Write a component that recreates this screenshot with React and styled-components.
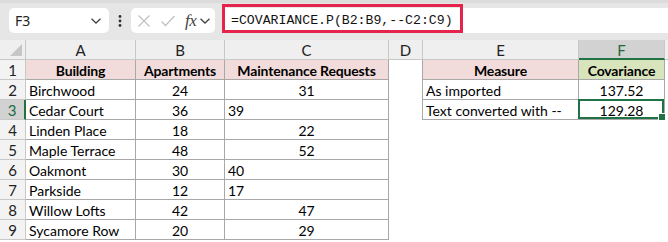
import React from "react";
import styled, { createGlobalStyle } from "styled-components";

const Global = createGlobalStyle`
  html, body { margin: 0; padding: 0; background: #fff; }
  body { width: 668px; height: 242px; overflow: hidden; }
`;

const Page = styled.div`
  width: 668px;
  height: 242px;
  display: flex;
  flex-direction: column;
  overflow: hidden;
  font-family: Lato, "Liberation Sans", sans-serif;
`;

const Toolbar = styled.div`
  height: 40px;
  box-sizing: border-box;
  background: #e6e6e6;
  border-top: 3px solid #dcdcdc;
  display: flex;
  align-items: flex-start;
  padding: 5px 0 0 9px;
`;

const NameBox = styled.div`
  width: 100px;
  height: 25px;
  box-sizing: border-box;
  background: #fff;
  border-radius: 5px;
  display: flex;
  align-items: center;
  justify-content: space-between;
  padding: 0 7px 0 6px;
  font-family: "Noto Sans", sans-serif;
  font-size: 14px;
  color: #222;
`;

const Dots = styled.div`
  width: 22px;
  height: 25px;
  display: flex;
  align-items: center;
  justify-content: center;
`;

const FxBox = styled.div`
  width: 84px;
  height: 25px;
  box-sizing: border-box;
  background: #fff;
  border-radius: 5px;
  display: flex;
  align-items: center;
  padding: 0 0 0 6px;
`;

const FxText = styled.span`
  font-family: "Liberation Serif", serif;
  font-style: italic;
  font-size: 17px;
  color: #444;
  margin-left: 9px;
  letter-spacing: -0.5px;
`;

const FormulaField = styled.div`
  position: relative;
  flex: 1;
  height: 25px;
  margin-left: 7px;
  background: #fff;
  display: flex;
  align-items: center;
  padding-left: 9px;
  font-family: "Liberation Mono", monospace;
  font-size: 13.2px;
  color: #111;
`;

const Highlight = styled.div`
  position: absolute;
  left: 0;
  top: -4px;
  width: 241px;
  height: 29px;
  box-sizing: border-box;
  border: 3px solid #e5234d;
  pointer-events: none;
`;

const Sheet = styled.div`
  display: grid;
  grid-template-columns: 26px 110px 89px 164px 34px 156px 86px 1fr;
  grid-auto-rows: 20px;
  font-size: 14px;
  color: #000;
`;

const Corner = styled.div`
  background: #efefef;
  border-right: 1px solid #c8c8c8;
  border-bottom: 1px solid #c8c8c8;
  box-sizing: border-box;
  position: relative;
  &::after {
    content: "";
    position: absolute;
    right: 3px;
    bottom: 3px;
    width: 0;
    height: 0;
    border-left: 12px solid transparent;
    border-bottom: 12px solid #c6c6c6;
  }
`;

const ColHead = styled.div`
  box-sizing: border-box;
  background: ${(p) => (p.$sel ? "#d2d2d2" : "#efefef")};
  border-right: 1px solid #c8c8c8;
  border-bottom: ${(p) => (p.$sel ? "2px solid #217346" : "1px solid #c8c8c8")};
  color: ${(p) => (p.$sel ? "#1d6a40" : "#222")};
  display: flex;
  align-items: center;
  justify-content: center;
  font-size: 15px;
  padding-top: 1px;
`;

const ColFill = styled.div`
  background: #efefef;
  border-bottom: 1px solid #c8c8c8;
  box-sizing: border-box;
`;

const RowHead = styled.div`
  box-sizing: border-box;
  background: ${(p) => (p.$sel ? "#d2d2d2" : "#f3f3f3")};
  border-right: ${(p) => (p.$sel ? "2px solid #217346" : "1px solid #c8c8c8")};
  border-bottom: 1px solid #c8c8c8;
  color: ${(p) => (p.$sel ? "#1d6a40" : "#222")};
  display: flex;
  align-items: center;
  justify-content: center;
  font-size: 15px;
  padding-top: 1px;
`;

const Cell = styled.div`
  position: relative;
  box-sizing: border-box;
  background: ${(p) => p.$bg || "#fff"};
  border-right: ${(p) => (p.$br ? "1px solid #a8a8a8" : "none")};
  border-bottom: ${(p) => (p.$bb ? "1px solid #a8a8a8" : "none")};
  font-weight: ${(p) => (p.$bold ? 700 : 400)};
  letter-spacing: ${(p) => (p.$bold ? "-0.15px" : "0")};
  display: flex;
  align-items: center;
  justify-content: ${(p) =>
    p.$align === "center" ? "center" : p.$align === "right" ? "flex-end" : "flex-start"};
  padding: 1px 3px 0 3px;
  white-space: nowrap;
`;

const Selection = styled.div`
  position: absolute;
  left: -1px;
  top: -1px;
  right: 0;
  bottom: 0;
  border: 2px solid #217346;
  pointer-events: none;
`;

const Handle = styled.div`
  position: absolute;
  right: -4px;
  bottom: -4px;
  width: 6px;
  height: 6px;
  background: #217346;
  border: 1px solid #fff;
`;

const Chevron = ({ x = 0 }) => (
  <svg width="12" height="8" viewBox="0 0 12 8" style={{ marginLeft: x }}>
    <path d="M1.5 1.8 L6 6 L10.5 1.8" fill="none" stroke="#444" strokeWidth="1.3" />
  </svg>
);

const pink = "#f2dcdb";
const green = "#d8e4bc";

const rows = [
  ["Birchwood", "24", "31", false],
  ["Cedar Court", "36", "39", true],
  ["Linden Place", "18", "22", false],
  ["Maple Terrace", "48", "52", false],
  ["Oakmont", "30", "40", true],
  ["Parkside", "12", "17", true],
  ["Willow Lofts", "42", "47", false],
  ["Sycamore Row", "20", "29", false],
];

const side = {
  2: ["As imported", "137.52"],
  3: ["Text converted with --", "129.28"],
};

export default function App() {
  const cols = ["A", "B", "C", "D", "E", "F"];
  return (
    <Page>
      <Global />
      <Toolbar>
        <NameBox>
          <span>F3</span>
          <Chevron />
        </NameBox>
        <Dots>
          <svg width="4" height="12" viewBox="0 0 4 12">
            <circle cx="2" cy="1.5" r="1.4" fill="#333" />
            <circle cx="2" cy="6" r="1.4" fill="#333" />
            <circle cx="2" cy="10.5" r="1.4" fill="#333" />
          </svg>
        </Dots>
        <FxBox>
          <svg width="14" height="14" viewBox="0 0 14 14">
            <path d="M1.5 1.5 L12.5 12.5 M12.5 1.5 L1.5 12.5" stroke="#c2c2c2" strokeWidth="1.3" fill="none" />
          </svg>
          <svg width="16" height="14" viewBox="0 0 16 14" style={{ marginLeft: 9 }}>
            <path d="M1.5 7.5 L5.5 11.5 L14.5 2" stroke="#c2c2c2" strokeWidth="1.3" fill="none" />
          </svg>
          <FxText>fx</FxText>
          <Chevron x={3} />
        </FxBox>
        <FormulaField>
          =COVARIANCE.P(B2:B9,--C2:C9)
          <Highlight />
        </FormulaField>
      </Toolbar>
      <Sheet>
        <Corner />
        {cols.map((c) => (
          <ColHead key={c} $sel={c === "F"}>
            {c}
          </ColHead>
        ))}
        <ColFill />

        <RowHead>1</RowHead>
        <Cell $bg={pink} $bold $align="center" $br $bb>Building</Cell>
        <Cell $bg={pink} $bold $align="center" $br $bb>Apartments</Cell>
        <Cell $bg={pink} $bold $align="center" $br $bb>Maintenance Requests</Cell>
        <Cell $br />
        <Cell $bg={pink} $bold $align="center" $br $bb>Measure</Cell>
        <Cell $bg={green} $bold $align="center" $br $bb>Covariance</Cell>
        <Cell />

        {rows.map(([name, apt, req, isText], i) => {
          const r = i + 2;
          const s = side[r];
          return (
            <React.Fragment key={r}>
              <RowHead $sel={r === 3}>{r}</RowHead>
              <Cell $br $bb>{name}</Cell>
              <Cell $br $bb $align="center">{apt}</Cell>
              <Cell $br $bb $align={isText ? "left" : "center"}>{req}</Cell>
              <Cell $br={!!s} />
              {s ? (
                <>
                  <Cell $br $bb>{s[0]}</Cell>
                  <Cell $br $bb $align="center">
                    {s[1]}
                    {r === 3 && (
                      <Selection>
                        <Handle />
                      </Selection>
                    )}
                  </Cell>
                </>
              ) : (
                <>
                  <Cell />
                  <Cell />
                </>
              )}
              <Cell />
            </React.Fragment>
          );
        })}
      </Sheet>
    </Page>
  );
}
